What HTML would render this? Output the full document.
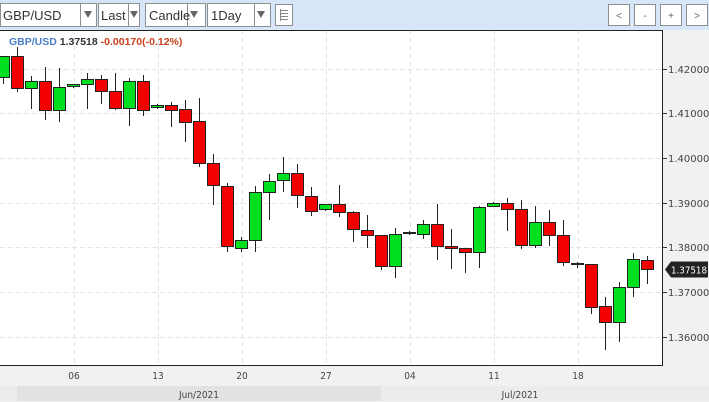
<!DOCTYPE html>
<html><head><meta charset="utf-8"><style>
body{margin:0;width:709px;height:402px;overflow:hidden;background:#f0f1f3;font-family:"Liberation Sans",sans-serif}
svg{display:block}
</style></head><body>
<svg width="709" height="402" xmlns="http://www.w3.org/2000/svg" font-family="Liberation Sans, sans-serif">
<rect x="0" y="0" width="709" height="30" fill="#d6e5f7"/>
<rect x="0" y="30" width="709" height="372" fill="#f0f1f3"/>
<g fill="#fff" stroke="#8e8e8e" stroke-width="1">
<rect x="0.5" y="3.5" width="96" height="23"/>
<rect x="98.5" y="3.5" width="41" height="23"/>
<rect x="145.5" y="3.5" width="60" height="23"/>
<rect x="207.5" y="3.5" width="63" height="23"/>
<rect x="275.5" y="4.5" width="17" height="21"/>
<rect x="608.5" y="4.5" width="21" height="21"/>
<rect x="634.5" y="4.5" width="21" height="21"/>
<rect x="660.5" y="4.5" width="21" height="21"/>
<rect x="686.5" y="4.5" width="21" height="21"/>
</g>
<g stroke="#8e8e8e"><line x1="80.5" y1="4" x2="80.5" y2="26"/><line x1="128.5" y1="4" x2="128.5" y2="26"/><line x1="187.5" y1="4" x2="187.5" y2="26"/><line x1="254.5" y1="4" x2="254.5" y2="26"/></g>
<g fill="#666"><path d="M84 11h8l-4 7z"/><path d="M130 11h8l-4 7z"/><path d="M190 11h8l-4 7z"/><path d="M257 11h8l-4 7z"/></g>
<g stroke="#888" stroke-width="1"><line x1="280" y1="10.5" x2="288" y2="10.5"/><line x1="280" y1="13.5" x2="288" y2="13.5"/><line x1="280" y1="16.5" x2="288" y2="16.5"/><line x1="280" y1="19.5" x2="288" y2="19.5"/><line x1="280.5" y1="9" x2="280.5" y2="21"/></g>
<g font-size="13" fill="#333"><text x="3" y="20">GBP/USD</text><text x="101" y="20">Last</text><text x="149" y="20">Candle</text><text x="211" y="20">1Day</text></g>
<g font-size="10" fill="#666" text-anchor="middle"><text x="619" y="19">&lt;</text><text x="645" y="19">-</text><text x="671" y="19">+</text><text x="697" y="19">&gt;</text></g>
<rect x="0" y="30" width="663" height="335" fill="#fff"/>
<g stroke="#e4e4e4" stroke-dasharray="5,3">
<line x1="0" y1="69.5" x2="663" y2="69.5"/><line x1="0" y1="113.5" x2="663" y2="113.5"/><line x1="0" y1="158.5" x2="663" y2="158.5"/><line x1="0" y1="203.5" x2="663" y2="203.5"/><line x1="0" y1="247.5" x2="663" y2="247.5"/><line x1="0" y1="292.5" x2="663" y2="292.5"/><line x1="0" y1="337.5" x2="663" y2="337.5"/>
<line x1="74.5" y1="30" x2="74.5" y2="365"/><line x1="158.5" y1="30" x2="158.5" y2="365"/><line x1="242.5" y1="30" x2="242.5" y2="365"/><line x1="326.5" y1="30" x2="326.5" y2="365"/><line x1="410.5" y1="30" x2="410.5" y2="365"/><line x1="494.5" y1="30" x2="494.5" y2="365"/><line x1="578.5" y1="30" x2="578.5" y2="365"/>
</g>
<g stroke="#222" stroke-width="1">
<line x1="0" y1="30.5" x2="663" y2="30.5"/><line x1="662.5" y1="30" x2="662.5" y2="366"/><line x1="0" y1="365.5" x2="663" y2="365.5"/>
</g>
<g stroke="#333"><line x1="663" y1="69.5" x2="667" y2="69.5"/><line x1="663" y1="113.5" x2="667" y2="113.5"/><line x1="663" y1="158.5" x2="667" y2="158.5"/><line x1="663" y1="203.5" x2="667" y2="203.5"/><line x1="663" y1="247.5" x2="667" y2="247.5"/><line x1="663" y1="292.5" x2="667" y2="292.5"/><line x1="663" y1="337.5" x2="667" y2="337.5"/></g>
<g font-size="10" fill="#444" font-family="DejaVu Sans, sans-serif"><text x="668" y="73">1.42000</text><text x="668" y="117">1.41000</text><text x="668" y="162">1.40000</text><text x="668" y="207">1.39000</text><text x="668" y="251">1.38000</text><text x="668" y="296">1.37000</text><text x="668" y="341">1.36000</text></g>
<path d="M665 269.5l6-8h37v16h-37z" fill="#222"/>
<text x="671" y="273.5" font-size="10" fill="#fff" font-family="DejaVu Sans, sans-serif" textLength="36" lengthAdjust="spacingAndGlyphs">1.37518</text>
<g stroke="#222" stroke-width="1">
<path d="M3.5 56V84M17.5 47V92M31.5 76V109M45.5 67V120M59.5 68V122M73.5 84V88M87.5 73V109M101.5 75V104M115.5 73V110M129.5 78V126M143.5 75V116M157.5 104V109M171.5 102V127M185.5 100V142M199.5 98V167M213.5 154V205M227.5 183V252M241.5 237V252M255.5 186V252M269.5 174V220M283.5 157V192M297.5 164V208M311.5 187V216M325.5 204V211M339.5 185V217M353.5 211V242M367.5 215V248M381.5 235V270M395.5 228V278M409.5 231V235M423.5 220V239M437.5 204V260M451.5 229V269M465.5 248V273M479.5 206V268M493.5 202V207M507.5 198V231M521.5 200V249M535.5 206V248M549.5 210V246M563.5 220V266M577.5 262V268M591.5 264V314M605.5 297V350M619.5 282V342M633.5 253V297M647.5 256V284"/>
</g>
<g stroke="#222" stroke-width="1">
<g fill="#00e01e">
<rect x="-2.5" y="56.5" width="12" height="21"/><rect x="25.5" y="81.5" width="12" height="7"/><rect x="53.5" y="87.5" width="12" height="23"/><rect x="67.5" y="84.5" width="12" height="2"/><rect x="81.5" y="79.5" width="12" height="5"/><rect x="123.5" y="81.5" width="12" height="27"/><rect x="151.5" y="105.5" width="12" height="2"/><rect x="235.5" y="240.5" width="12" height="8"/><rect x="249.5" y="192.5" width="12" height="48"/><rect x="263.5" y="181.5" width="12" height="11"/><rect x="277.5" y="173.5" width="12" height="7"/><rect x="319.5" y="204.5" width="12" height="5"/><rect x="389.5" y="234.5" width="12" height="32"/><rect x="417.5" y="224.5" width="12" height="10"/><rect x="473.5" y="207.5" width="12" height="45"/><rect x="487.5" y="203.5" width="12" height="3"/><rect x="529.5" y="222.5" width="12" height="23"/><rect x="613.5" y="287.5" width="12" height="35"/><rect x="627.5" y="259.5" width="12" height="28"/>
</g>
<g fill="#f20000">
<rect x="11.5" y="56.5" width="12" height="32"/><rect x="39.5" y="81.5" width="12" height="29"/><rect x="95.5" y="79.5" width="12" height="12"/><rect x="109.5" y="91.5" width="12" height="17"/><rect x="137.5" y="81.5" width="12" height="29"/><rect x="165.5" y="105.5" width="12" height="5"/><rect x="179.5" y="109.5" width="12" height="13"/><rect x="193.5" y="121.5" width="12" height="42"/><rect x="207.5" y="163.5" width="12" height="22"/><rect x="221.5" y="186.5" width="12" height="60"/><rect x="291.5" y="173.5" width="12" height="22"/><rect x="305.5" y="196.5" width="12" height="15"/><rect x="333.5" y="204.5" width="12" height="8"/><rect x="347.5" y="212.5" width="12" height="17"/><rect x="361.5" y="230.5" width="12" height="5"/><rect x="375.5" y="235.5" width="12" height="31"/><rect x="403.5" y="232.5" width="12" height="1"/><rect x="431.5" y="224.5" width="12" height="22"/><rect x="445.5" y="246.5" width="12" height="2"/><rect x="459.5" y="248.5" width="12" height="4"/><rect x="501.5" y="203.5" width="12" height="6"/><rect x="515.5" y="209.5" width="12" height="36"/><rect x="543.5" y="222.5" width="12" height="13"/><rect x="557.5" y="235.5" width="12" height="27"/><rect x="571.5" y="263.5" width="12" height="1"/><rect x="585.5" y="264.5" width="12" height="43"/><rect x="599.5" y="306.5" width="12" height="16"/><rect x="641.5" y="260.5" width="12" height="9"/>
</g>
</g>
<text x="9" y="45" font-size="10.5" font-weight="bold" fill="#4a7ec6">GBP/USD <tspan fill="#333">1.37518</tspan> <tspan fill="#c8401c">-0.00170(-0.12%)</tspan></text>
<g font-size="10" fill="#444" text-anchor="middle" font-family="DejaVu Sans Condensed, DejaVu Sans, sans-serif"><text x="74" y="379">06</text><text x="158" y="379">13</text><text x="242" y="379">20</text><text x="326" y="379">27</text><text x="410" y="379">04</text><text x="494" y="379">11</text><text x="578" y="379">18</text></g>
<rect x="0" y="386" width="709" height="15" fill="#ebecee"/>
<rect x="17" y="386" width="364" height="15" fill="#e1e2e4"/>
<g font-size="10" fill="#444" text-anchor="middle" font-family="DejaVu Sans Condensed, DejaVu Sans, sans-serif"><text x="199" y="398">Jun/2021</text><text x="520" y="398">Jul/2021</text></g>
</svg>
</body></html>
